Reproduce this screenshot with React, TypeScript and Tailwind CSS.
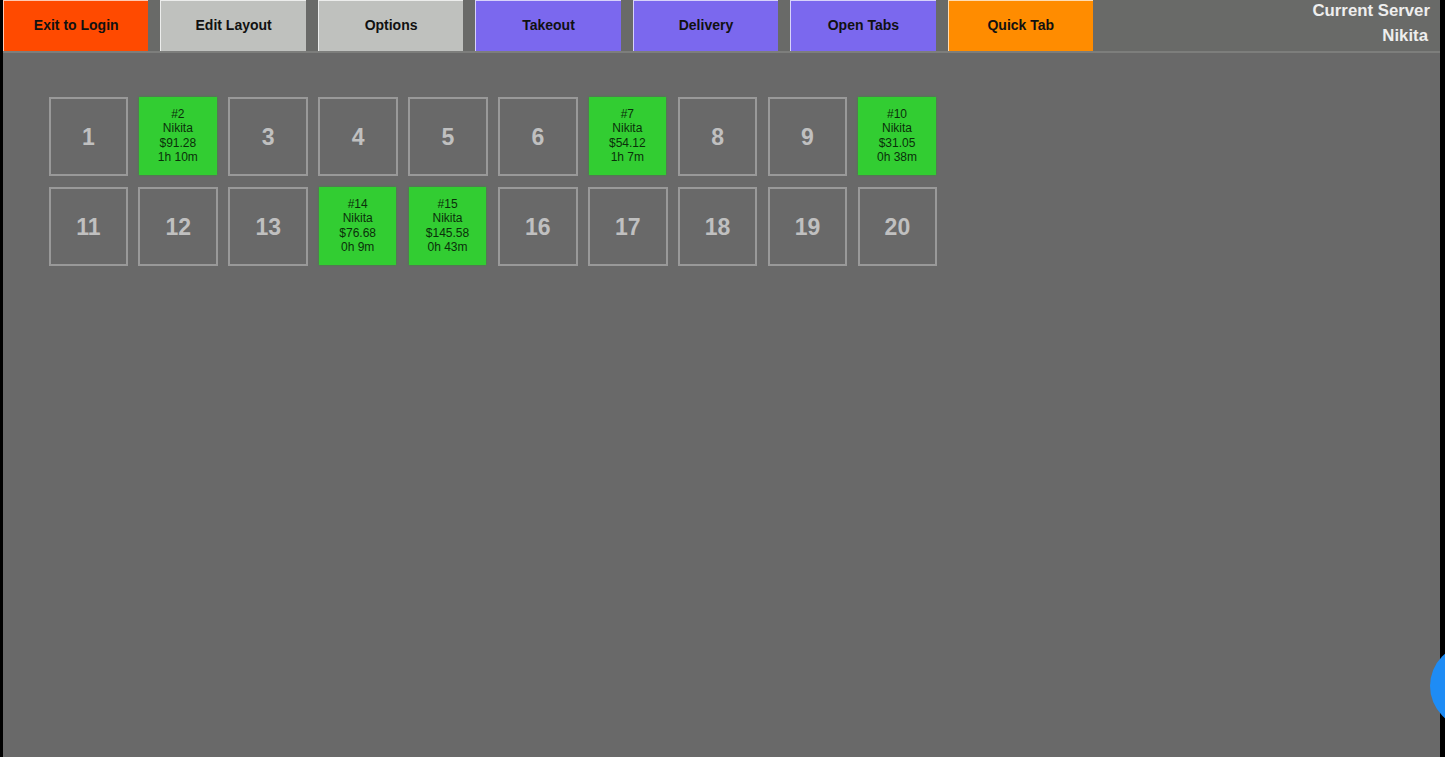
const topButtons = [
  { label: "Exit to Login", color: "bg-[#ff4a00]" },
  { label: "Edit Layout", color: "bg-[#bfc1be]" },
  { label: "Options", color: "bg-[#bfc1be]" },
  { label: "Takeout", color: "bg-[#7b68ee]" },
  { label: "Delivery", color: "bg-[#7b68ee]" },
  { label: "Open Tabs", color: "bg-[#7b68ee]" },
  { label: "Quick Tab", color: "bg-[#ff8c00]" },
];

type Ticket = { id: number; amount: string; time: string };

const tickets: Record<number, Ticket> = {
  2: { id: 2, amount: "$91.28", time: "1h 10m" },
  7: { id: 7, amount: "$54.12", time: "1h 7m" },
  10: { id: 10, amount: "$31.05", time: "0h 38m" },
  14: { id: 14, amount: "$76.68", time: "0h 9m" },
  15: { id: 15, amount: "$145.58", time: "0h 43m" },
};

const tables = Array.from({ length: 20 }, (_, i) => i + 1);

function TableCell({ n }: { n: number }) {
  const ticket = tickets[n];
  if (ticket) {
    return (
      <div className="ml-[0.7px] w-[77.4px] h-[78px] bg-[#32cd32] shadow-[0_0_2px_#2a9a2a] flex flex-col items-center justify-center text-[12px] leading-[14.5px] text-[#0a300a]">
        <span>#{ticket.id}</span>
        <span>Nikita</span>
        <span>{ticket.amount}</span>
        <span>{ticket.time}</span>
      </div>
    );
  }
  return (
    <div className="w-[79.6px] h-[79.6px] pt-px border-2 border-[#999999] flex items-center justify-center text-[23px] font-bold text-[#c0c0c0]">
      {n}
    </div>
  );
}

export default function App() {
  return (
    <div className="relative h-[757px] w-[1445px] overflow-hidden bg-black font-['Liberation_Sans',Arial,sans-serif]">
      <div className="ml-[3px] w-[1437px] h-[757px] bg-[#696969] flex flex-col">
        <div className="h-[53px] shrink-0 bg-[#696a68] border-b-2 border-[#7d7e7c] flex justify-between">
          <div className="flex gap-[12.05px]">
            {topButtons.map((b) => (
              <div
                key={b.label}
                className={`w-[145.4px] h-[50.5px] flex items-center justify-center text-[14px] font-bold text-[#111] border-t border-l border-white/70 ${b.color}`}
              >
                {b.label}
              </div>
            ))}
          </div>
          <div className="pr-[10px] -mt-[2px] text-right text-[16.8px] leading-[25px] font-bold text-[#eeeeee]">
            <div>Current Server</div>
            <div className="pr-[2px]">Nikita</div>
          </div>
        </div>
        <div className="pl-[45.6px] pt-[43.7px] grid grid-cols-[repeat(10,79.6px)] gap-x-[10.3px] gap-y-[10.4px]">
          {tables.map((n) => (
            <TableCell key={n} n={n} />
          ))}
        </div>
      </div>
      <div className="absolute left-[1430px] top-[644px] w-[84px] h-[84px] rounded-full bg-[#1e8cf5]" />
    </div>
  );
}
